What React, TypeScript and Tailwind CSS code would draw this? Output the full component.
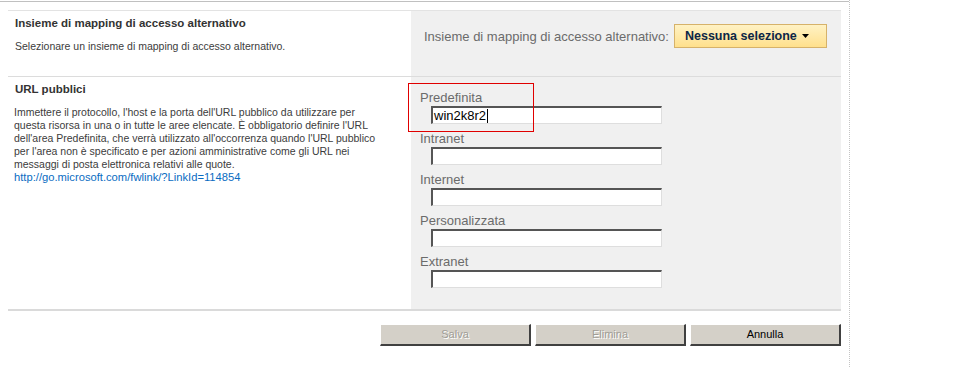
const fields = ['Predefinita', 'Intranet', 'Internet', 'Personalizzata', 'Extranet'];

const UrlField = ({ label, value }: { label: string; value?: string }) => {
  return (
    <div className="flex flex-col">
      <div className="h-[15px] leading-[15px] text-[13px] text-[#6b6b6b]">{label}</div>
      <div className="mt-px ml-[11px] flex h-[18px] w-[231px] items-center border-t-2 border-l-2 border-r border-b border-t-[#555] border-l-[#555] border-r-[#dedede] border-b-[#dedede] bg-white pl-px text-[13px] leading-none text-black">
        {value && (
          <>
            <span>{value}</span>
            <span className="ml-px inline-block h-[14px] w-px bg-black" />
          </>
        )}
      </div>
    </div>
  );
};

const ClassicButton = ({ label, disabled }: { label: string; disabled?: boolean }) => {
  return (
    <button
      type="button"
      className={
        disabled
          ? 'h-[22px] w-[151px] border-t border-l border-r-2 border-b-2 border-t-white border-l-white border-r-[#404040] border-b-[#404040] bg-[#d4d0c8] text-[11px] text-[#a09d96] text-shadow-[1px_1px_0_#fff]'
          : 'h-[22px] w-[151px] border-t border-l border-r-2 border-b-2 border-t-white border-l-white border-r-[#404040] border-b-[#404040] bg-[#d4d0c8] text-[11px] text-black'
      }
    >
      {label}
    </button>
  );
};

const App = () => {
  return (
    <div className="min-h-[367px] w-[850px] border-r border-dotted border-[#c4c4c4] bg-white font-['Liberation_Sans',Arial,sans-serif]">
      <div className="pt-px">
        <div className="border-t border-[#c0c0c0]" />
      </div>

      <div className="px-2 pt-2">
        {/* mapping set */}
        <div className="flex h-[66px] border-t border-[#e3e3e3]">
          <div className="w-[403px] pl-[7px] pt-[5px]">
            <h3 className="text-[11.5px] font-bold leading-[14px] text-[#333]">
              Insieme di mapping di accesso alternativo
            </h3>
            <p className="mt-[10px] text-[10.5px] leading-[13px] text-[#3c3c3c]">
              Selezionare un insieme di mapping di accesso alternativo.
            </p>
          </div>
          <div className="flex flex-1 items-start bg-[#f0f0f0] pl-[13px] pt-[13px]">
            <span className="mt-[5px] text-[13px] leading-[15px] text-[#6b6b6b]">
              Insieme di mapping di accesso alternativo:
            </span>
            <button
              type="button"
              className="ml-[5px] flex h-[24px] w-[153px] items-center border border-[#d6b26a] bg-gradient-to-b from-[#fff2c4] to-[#ffe08c] pl-[10px] text-[12.5px] font-bold text-[#0c2647]"
            >
              Nessuna selezione
              <svg className="ml-[5px]" width="7" height="4" viewBox="0 0 7 4">
                <path d="M0 0h7L3.5 4z" fill="#000" />
              </svg>
            </button>
          </div>
        </div>

        {/* public urls */}
        <div className="flex h-[235px] border-t border-b-2 border-t-[#dcdcdc] border-b-[#dadada]">
          <div className="w-[403px] pl-[6px] pt-[5px]">
            <h3 className="pl-px text-[11.5px] font-bold leading-[14px] text-[#333]">URL pubblici</h3>
            <p className="mt-[10px] whitespace-nowrap text-[10.5px] leading-[13px] text-[#3c3c3c]">
              Immettere il protocollo, l'host e la porta dell'URL pubblico da utilizzare per
              <br />
              questa risorsa in una o in tutte le aree elencate. È obbligatorio definire l'URL
              <br />
              dell'area Predefinita, che verrà utilizzato all'occorrenza quando l'URL pubblico
              <br />
              per l'area non è specificato e per azioni amministrative come gli URL nei
              <br />
              messaggi di posta elettronica relativi alle quote.
              <br />
              <a href="#" className="text-[11.2px] text-[#0a6cc2]">
                http://go.microsoft.com/fwlink/?LinkId=114854
              </a>
            </p>
          </div>
          <div className="relative flex flex-1 flex-col gap-[7px] bg-[#f0f0f0] pl-[9px] pt-[13px]">
            {fields.map((f, i) => (
              <UrlField key={f} label={f} value={i === 0 ? 'win2k8r2' : undefined} />
            ))}
            <div className="absolute left-[-3px] top-[6px] h-[49px] w-[126px] border border-[#e00000]" />
          </div>
        </div>

        <div className="flex justify-end gap-[4px] pt-[13px]">
          <ClassicButton label="Salva" disabled />
          <ClassicButton label="Elimina" disabled />
          <ClassicButton label="Annulla" />
        </div>
      </div>
    </div>
  );
};

export default App;
